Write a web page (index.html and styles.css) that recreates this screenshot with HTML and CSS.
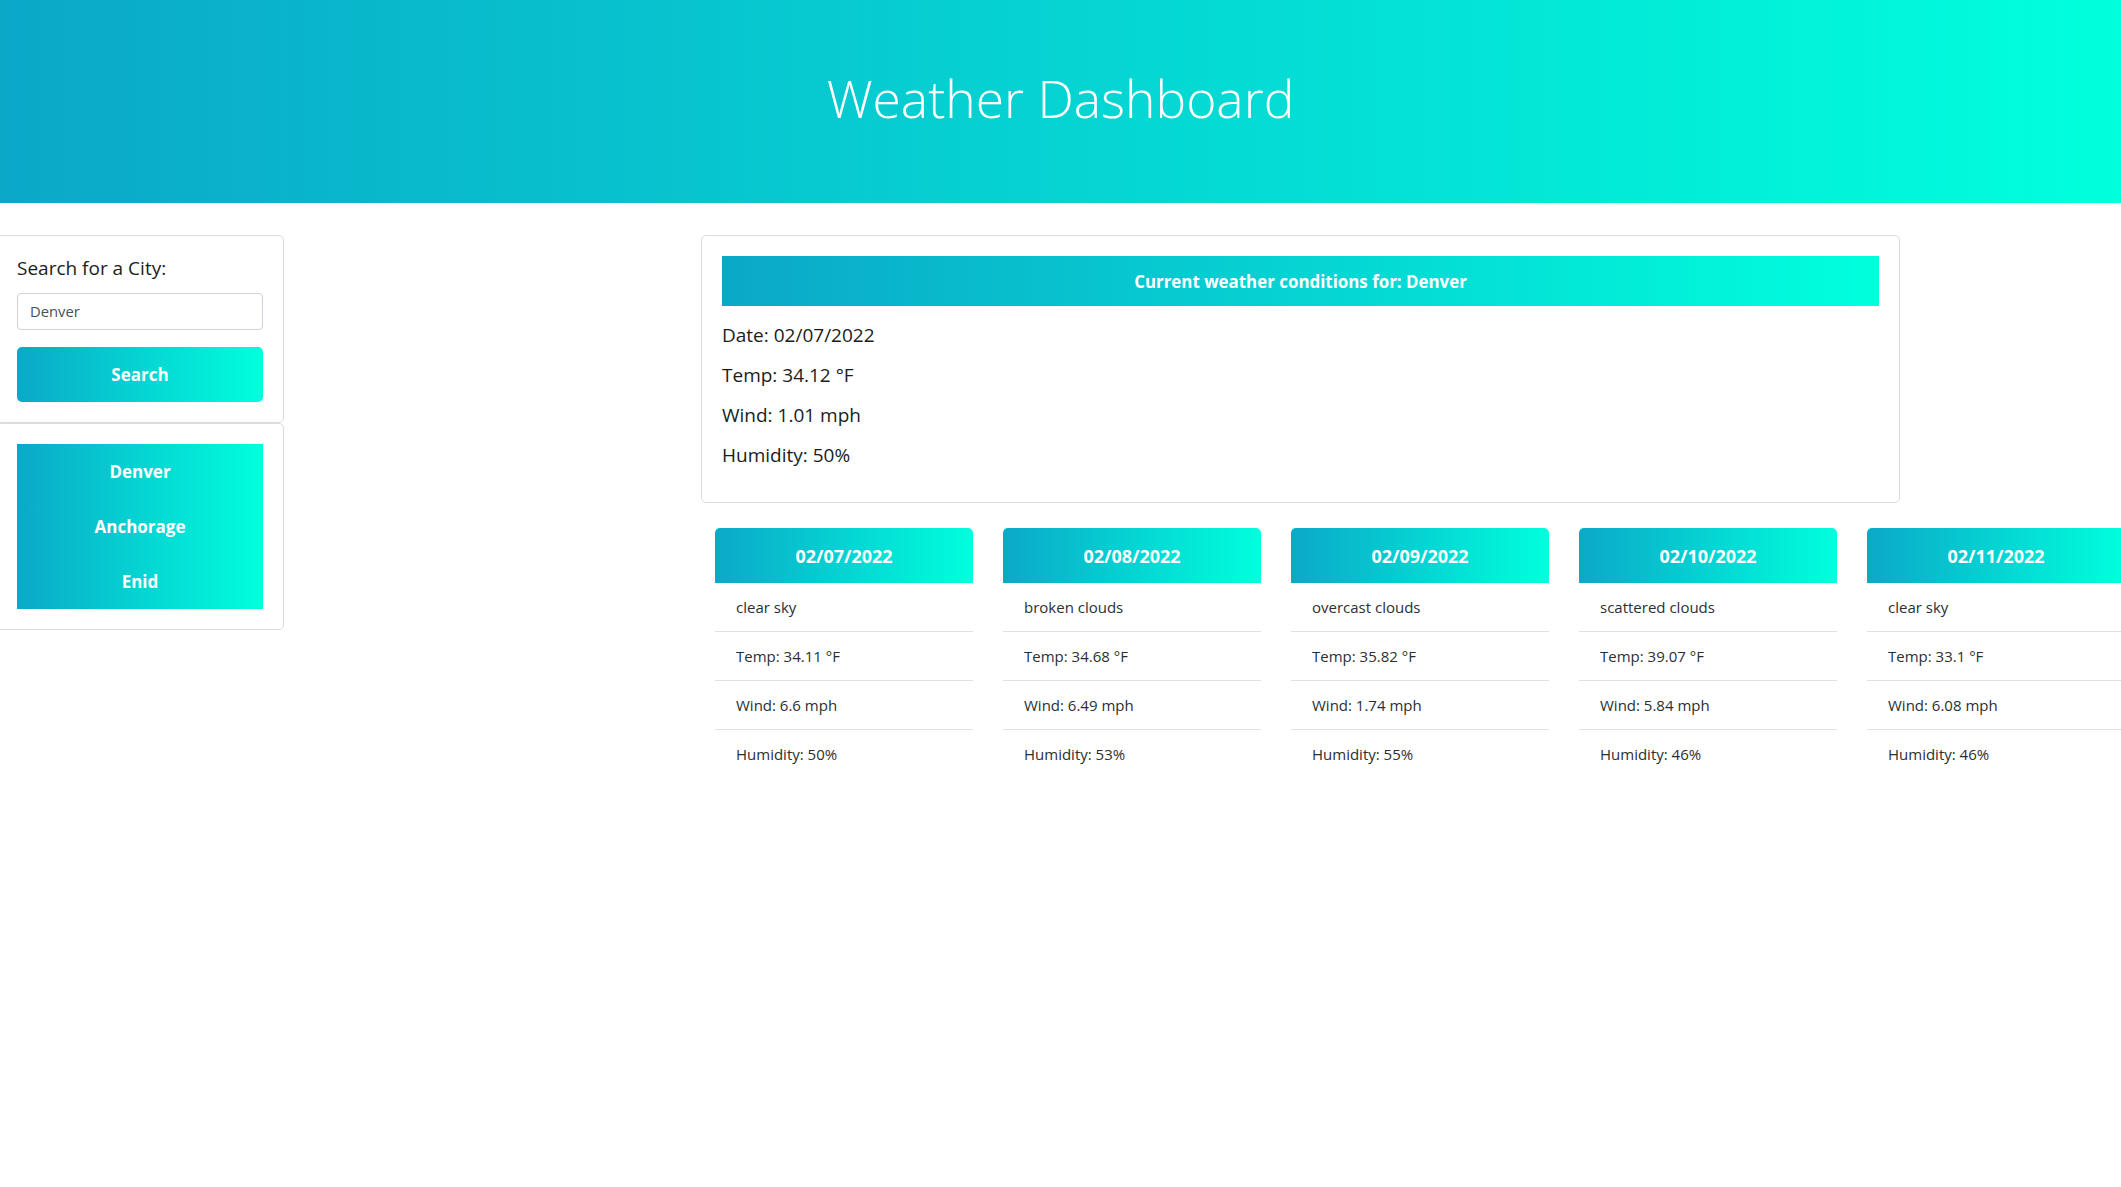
FILE: index.html
```html
<!DOCTYPE html>
<html lang="en">
<head>
<meta charset="utf-8">
<title>Weather Dashboard</title>
<link rel="stylesheet" href="styles.css">
</head>
<body>
<header class="hero">
  <h1 class="hero-title">Weather Dashboard</h1>
</header>
<main class="layout">
  <aside class="sidebar">
    <section class="card search-card">
      <label class="search-label" for="city">Search for a City:</label>
      <input class="search-input" id="city" type="text" value="Denver">
      <button class="search-btn" type="button">Search</button>
    </section>
    <section class="card history-card">
      <div class="history">
        <button class="history-item" type="button">Denver</button>
        <button class="history-item" type="button">Anchorage</button>
        <button class="history-item" type="button">Enid</button>
      </div>
    </section>
  </aside>
  <div class="content">
    <section class="card current">
      <h2 class="current-head">Current weather conditions for: Denver</h2>
      <p class="current-line">Date: 02/07/2022</p>
      <p class="current-line">Temp: 34.12 °F</p>
      <p class="current-line">Wind: 1.01 mph</p>
      <p class="current-line">Humidity: 50%</p>
    </section>
    <div class="forecast">
      <article class="fc">
        <h3 class="fc-date">02/07/2022</h3>
        <ul class="fc-list">
          <li>clear sky</li>
          <li>Temp: 34.11 °F</li>
          <li>Wind: 6.6 mph</li>
          <li>Humidity: 50%</li>
        </ul>
      </article>
      <article class="fc">
        <h3 class="fc-date">02/08/2022</h3>
        <ul class="fc-list">
          <li>broken clouds</li>
          <li>Temp: 34.68 °F</li>
          <li>Wind: 6.49 mph</li>
          <li>Humidity: 53%</li>
        </ul>
      </article>
      <article class="fc">
        <h3 class="fc-date">02/09/2022</h3>
        <ul class="fc-list">
          <li>overcast clouds</li>
          <li>Temp: 35.82 °F</li>
          <li>Wind: 1.74 mph</li>
          <li>Humidity: 55%</li>
        </ul>
      </article>
      <article class="fc">
        <h3 class="fc-date">02/10/2022</h3>
        <ul class="fc-list">
          <li>scattered clouds</li>
          <li>Temp: 39.07 °F</li>
          <li>Wind: 5.84 mph</li>
          <li>Humidity: 46%</li>
        </ul>
      </article>
      <article class="fc">
        <h3 class="fc-date">02/11/2022</h3>
        <ul class="fc-list">
          <li>clear sky</li>
          <li>Temp: 33.1 °F</li>
          <li>Wind: 6.08 mph</li>
          <li>Humidity: 46%</li>
        </ul>
      </article>
    </div>
  </div>
</main>
</body>
</html>
```

FILE: styles.css
```css
html, body {
  margin: 0;
  padding: 0;
}

body {
  font-family: "Open Sans", "Noto Sans", sans-serif;
  color: #212529;
  background: #fff;
  overflow-x: hidden;
}

.hero {
  box-sizing: border-box;
  height: 203px;
  padding-bottom: 6px;
  background: linear-gradient(90deg, #0ba8c8 0%, #00ffdd 100%);
  display: flex;
  align-items: center;
  justify-content: center;
}

.hero-title {
  margin: 0;
  font-weight: 300;
  font-size: 51.5px;
  line-height: 1;
  color: #fff;
}

.layout {
  display: flex;
  align-items: flex-start;
  padding-top: 32px;
}

.sidebar {
  flex: none;
  width: 288px;
  margin-left: -4px;
}

.card {
  box-sizing: border-box;
  border: 1px solid #dcdcdc;
  border-radius: 5px;
  background: #fff;
}

.search-card {
  padding: 17px 20px 20px;
}

.search-label {
  display: block;
  font-size: 19px;
  font-weight: 500;
  line-height: 30px;
  margin-bottom: 9.5px;
  color: #1a1d20;
}

.search-input {
  display: block;
  box-sizing: border-box;
  width: 100%;
  height: 37px;
  margin: 0;
  padding: 0 12px;
  border: 1px solid #ced4da;
  border-radius: 4px;
  font-family: inherit;
  font-size: 14.8px;
  color: #495057;
  background: #fff;
}

.search-btn,
.history,
.current-head,
.fc-date {
  background: linear-gradient(90deg, #0ba8c8 0%, #00ffdd 100%);
  color: #fff;
  font-weight: 700;
}

.search-btn {
  display: block;
  width: 100%;
  height: 55px;
  margin-top: 17px;
  border: 0;
  border-radius: 5px;
  font-family: inherit;
  font-size: 17px;
}

.history-card {
  padding: 20px;
}

.history {
  display: flex;
  flex-direction: column;
}

.history-item {
  height: 55px;
  border: 0;
  background: transparent;
  color: #fff;
  font-family: inherit;
  font-weight: 700;
  font-size: 17px;
}

.content {
  flex: 1;
  min-width: 0;
  padding-left: 417px;
}

.current {
  width: 1199px;
  padding: 20px 20px 27px;
}

.current-head {
  margin: 0 0 9px;
  height: 50px;
  display: flex;
  align-items: center;
  justify-content: center;
  font-size: 16.9px;
}

.current-line {
  margin: 0;
  font-size: 19px;
  font-weight: 500;
  line-height: 40px;
  color: #1a1d20;
}

.forecast {
  display: flex;
  gap: 30px;
  margin: 25px 0 0 14px;
}

.fc {
  flex: none;
  width: 258px;
}

.fc-date {
  margin: 0;
  height: 55px;
  border-radius: 5px 5px 0 0;
  display: flex;
  align-items: center;
  justify-content: center;
  font-size: 18px;
}

.fc-list {
  list-style: none;
  margin: 0;
  padding: 0;
}

.fc-list li {
  height: 48px;
  padding: 0 21px;
  border-bottom: 1px solid #dee2e6;
  display: flex;
  align-items: center;
  font-size: 15px;
  color: #2b2f33;
}

.fc-list li:last-child {
  border-bottom: 0;
}
```
